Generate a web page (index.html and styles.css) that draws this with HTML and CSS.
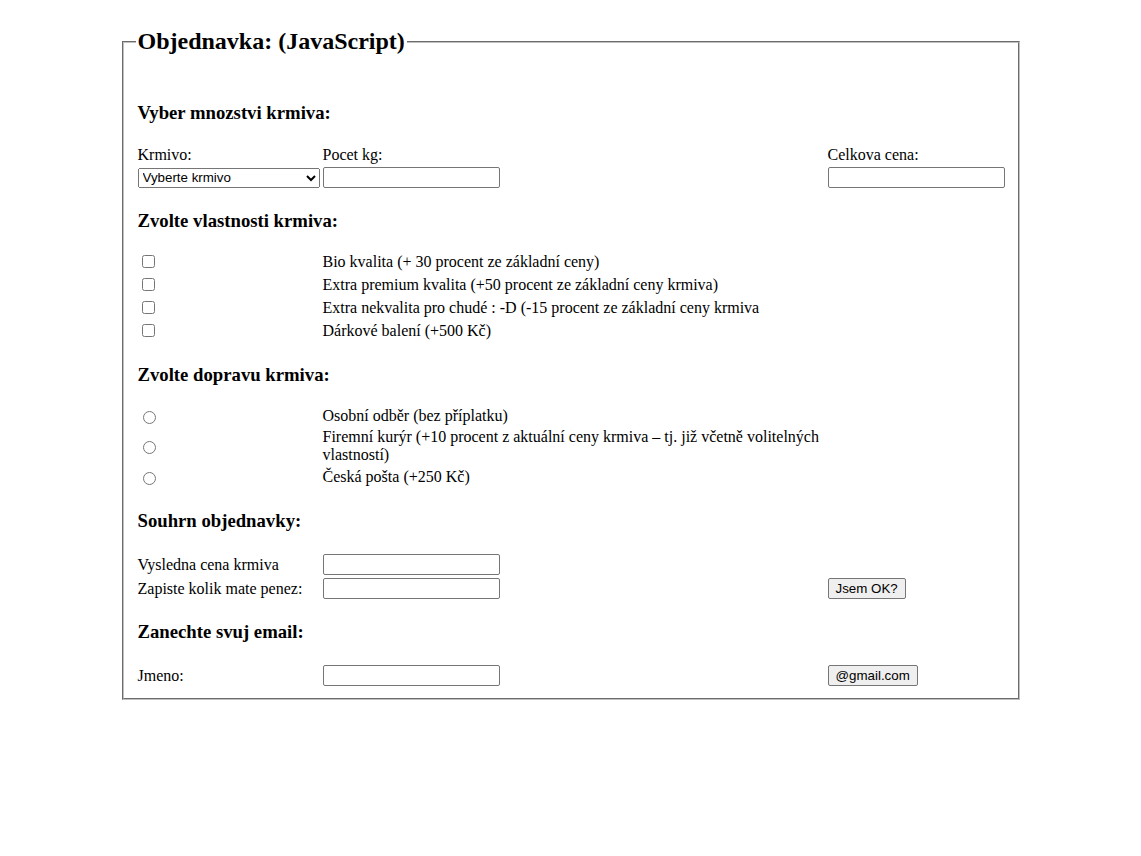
FILE: index.html
```html
<!DOCTYPE html>
<html lang="cs">
<head>
<meta charset="utf-8">
<title>Objednavka</title>
<link rel="stylesheet" href="styles.css">
</head>
<body>
<form class="order-form">
<fieldset class="order">
  <legend class="order-title">Objednavka: (JavaScript)</legend>

  <section class="block block--first">
    <h3 class="block-title">Vyber mnozstvi krmiva:</h3>
    <div class="form-grid">
      <span class="cell">Krmivo:</span>
      <span class="cell">Pocet kg:</span>
      <span class="cell">Celkova cena:</span>
      <span class="cell"><select class="select"><option>Vyberte krmivo</option></select></span>
      <span class="cell"><input class="text-input" type="text"></span>
      <span class="cell"><input class="text-input" type="text"></span>
    </div>
  </section>

  <section class="block">
    <h3 class="block-title">Zvolte vlastnosti krmiva:</h3>
    <div class="form-grid form-grid--options">
      <span class="cell"><input class="check" type="checkbox"></span>
      <span class="cell">Bio kvalita (+ 30 procent ze základní ceny)</span>
      <span class="cell"></span>
      <span class="cell"><input class="check" type="checkbox"></span>
      <span class="cell">Extra premium kvalita (+50 procent ze základní ceny krmiva)</span>
      <span class="cell"></span>
      <span class="cell"><input class="check" type="checkbox"></span>
      <span class="cell">Extra nekvalita pro chudé : -D (-15 procent ze základní ceny krmiva</span>
      <span class="cell"></span>
      <span class="cell"><input class="check" type="checkbox"></span>
      <span class="cell">Dárkové balení (+500 Kč)</span>
      <span class="cell"></span>
    </div>
  </section>

  <section class="block block--transport">
    <h3 class="block-title">Zvolte dopravu krmiva:</h3>
    <div class="form-grid form-grid--options">
      <span class="cell"><input class="radio" type="radio" name="doprava"></span>
      <span class="cell">Osobní odběr (bez příplatku)</span>
      <span class="cell"></span>
      <span class="cell"><input class="radio" type="radio" name="doprava"></span>
      <span class="cell">Firemní kurýr (+10 procent z aktuální ceny krmiva – tj. již včetně volitelných vlastností)</span>
      <span class="cell"></span>
      <span class="cell"><input class="radio" type="radio" name="doprava"></span>
      <span class="cell">Česká pošta (+250 Kč)</span>
      <span class="cell"></span>
    </div>
  </section>

  <section class="block block--summary">
    <h3 class="block-title">Souhrn objednavky:</h3>
    <div class="form-grid form-grid--tight">
      <span class="cell">Vysledna cena krmiva</span>
      <span class="cell"><input class="text-input" type="text"></span>
      <span class="cell"></span>
      <span class="cell">Zapiste kolik mate penez:</span>
      <span class="cell"><input class="text-input" type="text"></span>
      <span class="cell"><button class="btn" type="button">Jsem OK?</button></span>
    </div>
  </section>

  <section class="block">
    <h3 class="block-title">Zanechte svuj email:</h3>
    <div class="form-grid form-grid--tight">
      <span class="cell">Jmeno:</span>
      <span class="cell"><input class="text-input" type="text"></span>
      <span class="cell"><button class="btn" type="button">@gmail.com</button></span>
    </div>
  </section>
</fieldset>
</form>
</body>
</html>
```

FILE: styles.css
```css
html, body {
  background: #fff;
}

body {
  margin: 0;
  font-family: "Liberation Serif", "Times New Roman", serif;
  font-size: 16px;
  color: #000;
}

.order-form {
  margin: 0;
}

.order {
  width: 870px;
  margin: 28px auto 0;
  padding: 0 12px 11px;
  border: 2px groove #c0c0c0;
}

.order-title {
  font-size: 24px;
  font-weight: bold;
  padding: 0 2px;
}

.block {
  padding-left: 2px;
  margin-top: 21px;
}

.block--first {
  margin-top: 47px;
}

.block--transport {
  margin-top: 23px;
}

.block--summary {
  margin-top: 23px;
}

.block-title {
  margin: 0;
  font-size: 18.72px;
  font-weight: bold;
  line-height: 22px;
}

.form-grid {
  display: grid;
  grid-template-columns: 185px 505px 177px;
  row-gap: 2px;
  align-items: center;
  margin-top: 22px;
}

.form-grid--options {
  margin-top: 19px;
  grid-auto-rows: minmax(21px, auto);
}

.form-grid--tight {
  margin-top: 21px;
  row-gap: 1px;
}

.cell {
  line-height: 18px;
  display: block;
}

.select {
  width: 182px;
  height: 20px;
  margin: 0;
  font-family: "Liberation Sans", Arial, sans-serif;
  font-size: 13.33px;
  display: block;
}

.text-input {
  box-sizing: border-box;
  width: 177px;
  height: 21px;
  margin: 1px 0;
  padding: 1px 2px;
  border: 1px solid #767676;
  border-radius: 2px;
  font-family: "Liberation Sans", Arial, sans-serif;
  font-size: 13.33px;
  display: block;
}

.check {
  margin: 3px 3px 3px 4px;
  display: block;
}

.radio {
  margin: 3px 3px 0 5px;
  display: block;
}

.btn {
  font-family: "Liberation Sans", Arial, sans-serif;
  font-size: 13.33px;
  padding: 1px 7px;
  height: 21px;
  background: #efefef;
  border: 1px solid #767676;
  border-radius: 2px;
  color: #000;
  display: block;
  margin: 1px 0;
}
```
